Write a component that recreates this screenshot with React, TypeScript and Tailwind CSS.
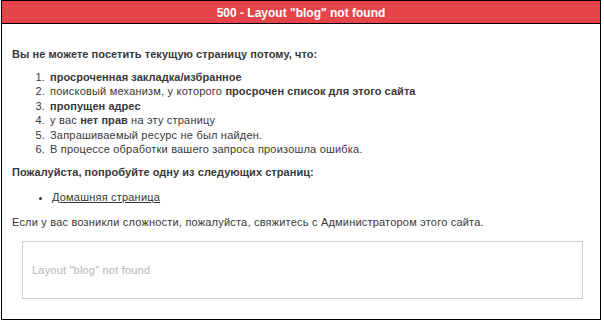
const items: { n: string; c: React.ReactNode }[] = [
  { n: "1.", c: <b className="tracking-[0.05px]">просроченная закладка/избранное</b> },
  {
    n: "2.",
    c: (
      <>
        поисковый механизм, у которого <b className="tracking-[0.05px]">просрочен список для этого сайта</b>
      </>
    ),
  },
  { n: "3.", c: <b className="tracking-[0.05px]">пропущен адрес</b> },
  {
    n: "4.",
    c: (
      <>
        у вас <b className="tracking-[0.05px]">нет прав</b> на эту страницу
      </>
    ),
  },
  { n: "5.", c: <>Запрашиваемый ресурс не был найден.</> },
  { n: "6.", c: <>В процессе обработки вашего запроса произошла ошибка.</> },
];

export default function App() {
  return (
    <div className="w-[604px] h-[321px] bg-white">
      <div
        className="ml-[1px] w-[600px] h-[320px] border border-black bg-white text-[#383838]"
        style={{ fontFamily: '"Liberation Sans", Arial, sans-serif' }}
      >
        <div className="h-[23px] pt-[2px] bg-[#e5444b] border-b border-black flex items-center justify-center">
          <span className="text-white font-bold text-[12px] leading-none whitespace-nowrap">
            500 - Layout "blog" not found
          </span>
        </div>
        <div className="px-[10px] pt-[23px] text-[11px] leading-[14.4px] tracking-[0.2px]">
          <p className="font-bold tracking-[0.05px]">Вы не можете посетить текущую страницу потому, что:</p>
          <ol className="mt-[8.5px]">
            {items.map((it) => (
              <li key={it.n} className="flex">
                <span className="w-[38px] shrink-0 text-right pr-[5px]">{it.n}</span>
                <span>{it.c}</span>
              </li>
            ))}
          </ol>
          <p className="font-bold tracking-[0.05px] mt-[9px]">Пожалуйста, попробуйте одну из следующих страниц:</p>
          <ul className="list-disc pl-[40px] mt-[10.6px]">
            <li>
              <a className="underline" href="#">
                Домашняя страница
              </a>
            </li>
          </ul>
          <p className="mt-[10.6px]">Если у вас возникли сложности, пожалуйста, свяжитесь с Администратором этого сайта.</p>
          <div className="ml-[10px] mr-[7px] mt-[11.5px] h-[58px] border border-[#cccccc] flex items-center pl-[9px] text-[#b5b5b5]">
            Layout "blog" not found
          </div>
        </div>
      </div>
    </div>
  );
}
